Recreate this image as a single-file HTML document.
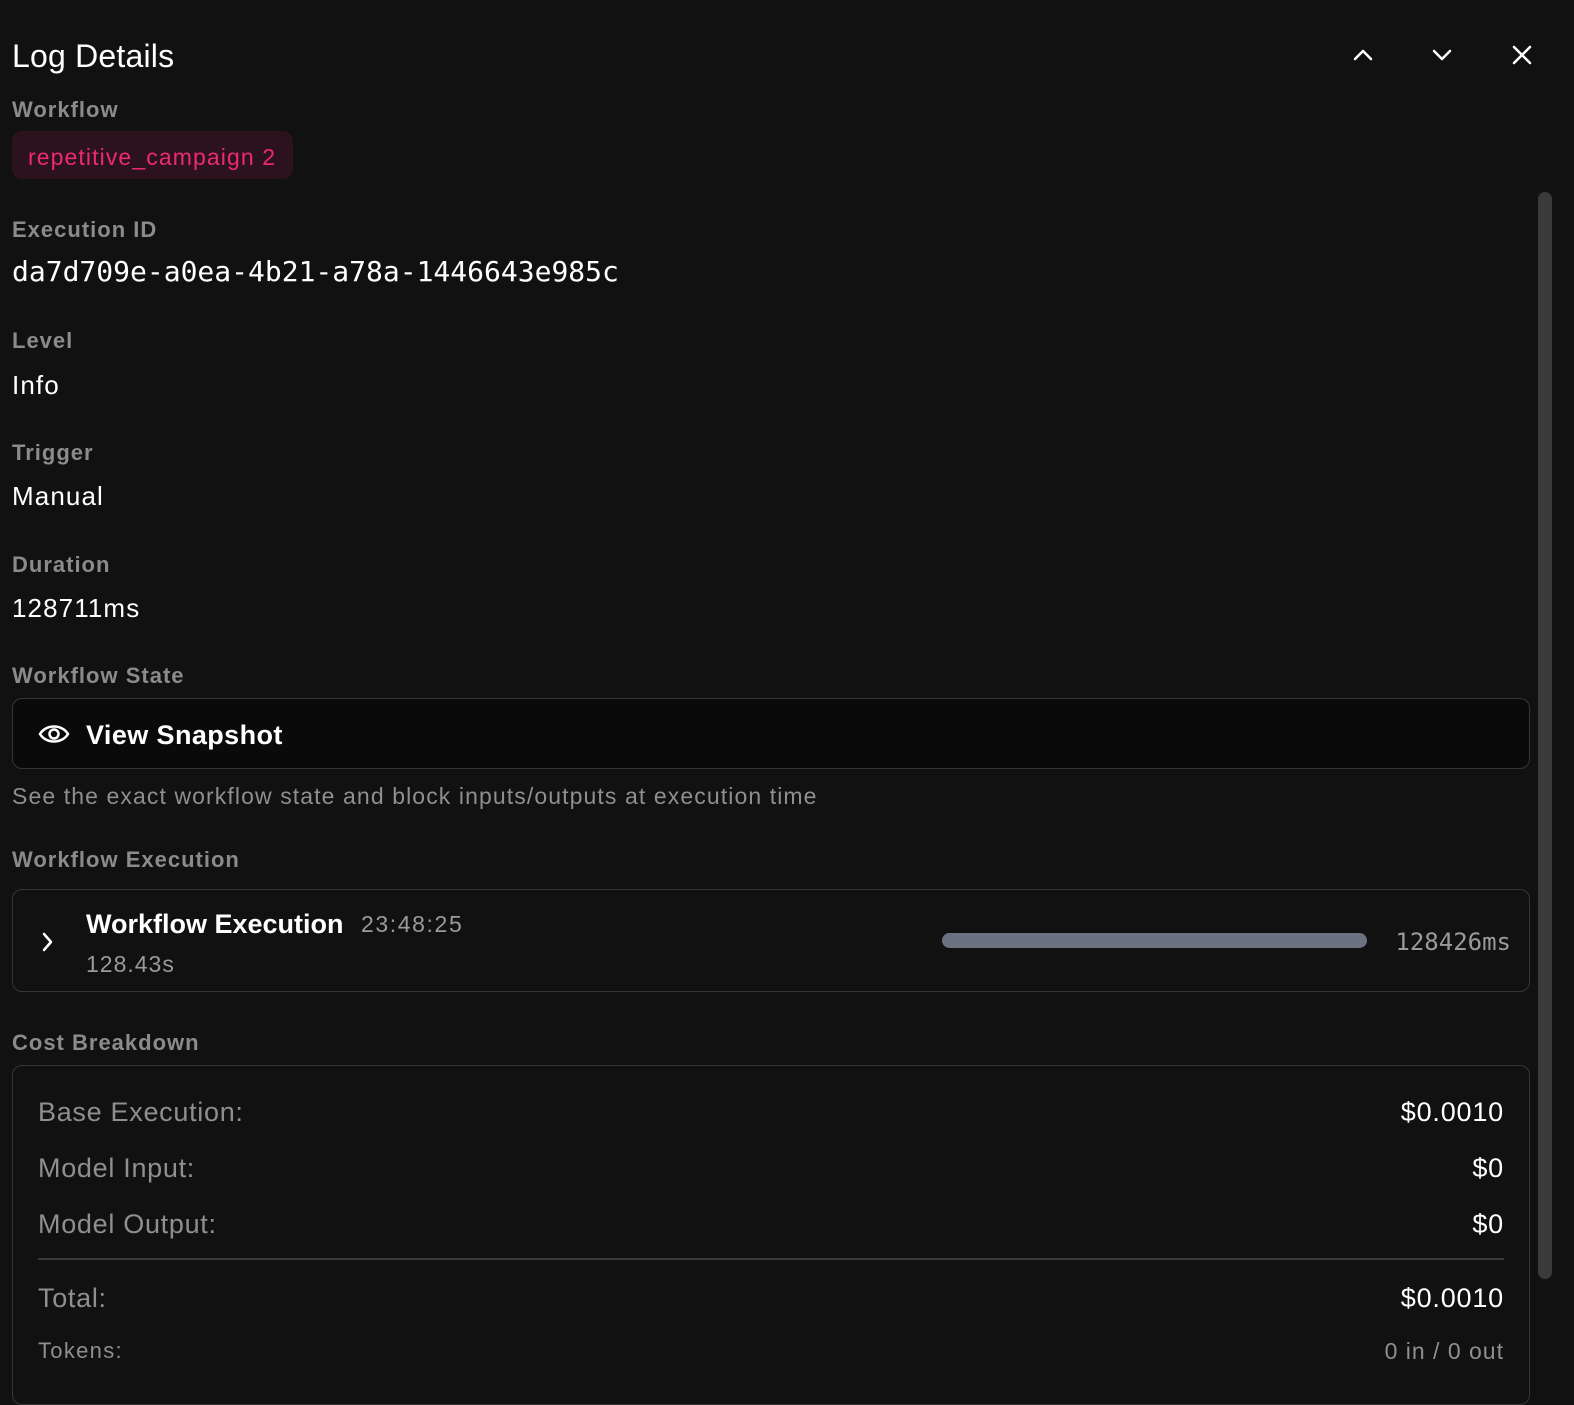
<!DOCTYPE html>
<html><head><meta charset="utf-8"><style>
html,body{margin:0;padding:0;background:#111111;width:1574px;height:1390px;overflow:hidden;font-family:"Liberation Sans",sans-serif;}
.t{position:absolute;line-height:1;white-space:nowrap;}
.lab{font-size:22px;color:#8b8b8b;font-weight:bold;letter-spacing:1px;}
.val{font-size:26px;color:#fff;letter-spacing:1.1px;}
.mono{font-family:"DejaVu Sans Mono","Liberation Mono",monospace;letter-spacing:0;}
.box{position:absolute;border:1.5px solid #353535;border-radius:10px;box-sizing:border-box;}
.r{right:70px;text-align:right;}
.g{color:#8f8f8f;letter-spacing:0.7px;}
</style></head><body>
<div class="t" style="left:12px;top:40px;font-size:32px;color:#fff;letter-spacing:0.2px;">Log Details</div>
<svg style="position:absolute;left:1350px;top:40px" width="185" height="30" viewBox="0 0 185 30" fill="none" stroke="#fff" stroke-width="2.5" stroke-linecap="round" stroke-linejoin="round">
<path d="M5 19 L13 11 L21 19"/><path d="M84 11 L92 19 L100 11"/><path d="M164 7 L180 23 M180 7 L164 23"/></svg>

<div class="t lab" style="left:12px;top:99px;">Workflow</div>
<div style="position:absolute;left:12px;top:131px;width:281px;height:48px;background:#2b121d;border-radius:10px;"></div>
<div class="t" style="left:28px;top:146px;font-size:23px;color:#ee2a6f;letter-spacing:1.1px;">repetitive_campaign 2</div>

<div class="t lab" style="left:12px;top:219px;">Execution ID</div>
<div class="t val mono" style="left:12px;top:258px;font-size:28px;">da7d709e-a0ea-4b21-a78a-1446643e985c</div>

<div class="t lab" style="left:12px;top:330px;">Level</div>
<div class="t val" style="left:12px;top:372px;">Info</div>
<div class="t lab" style="left:12px;top:442px;">Trigger</div>
<div class="t val" style="left:12px;top:483px;">Manual</div>
<div class="t lab" style="left:12px;top:554px;">Duration</div>
<div class="t val" style="left:12px;top:595px;">128711ms</div>
<div class="t lab" style="left:12px;top:665px;">Workflow State</div>

<div class="box" style="left:12px;top:698px;width:1518px;height:71px;background:#0a0a0a;"></div>
<svg style="position:absolute;left:38px;top:722px" width="32" height="24" viewBox="0 0 32 24" fill="none" stroke="#fff" stroke-width="2.5"><path d="M2 12 C8 2 24 2 30 12 C24 22 8 22 2 12 Z"/><circle cx="16" cy="12" r="4.5"/></svg>
<div class="t" style="left:86px;top:722px;font-size:27px;color:#fff;font-weight:bold;letter-spacing:0.4px;">View Snapshot</div>
<div class="t" style="left:12px;top:785px;font-size:23px;color:#8f8f8f;letter-spacing:1.1px;">See the exact workflow state and block inputs/outputs at execution time</div>

<div class="t lab" style="left:12px;top:849px;">Workflow Execution</div>
<div class="box" style="left:12px;top:889px;width:1518px;height:103px;"></div>
<svg style="position:absolute;left:40px;top:931px" width="16" height="22" viewBox="0 0 16 22" fill="none" stroke="#fff" stroke-width="2.5" stroke-linecap="round" stroke-linejoin="round"><path d="M4 3 L11 11 L4 19"/></svg>
<div class="t" style="left:86px;top:911px;font-size:27px;color:#fff;font-weight:bold;">Workflow Execution</div>
<div class="t" style="left:361px;top:913px;font-size:23px;color:#9a9a9a;letter-spacing:1.6px;">23:48:25</div>
<div class="t" style="left:86px;top:953px;font-size:23px;color:#9a9a9a;letter-spacing:1px;">128.43s</div>
<div style="position:absolute;left:942px;top:933px;width:425px;height:15px;background:#6b7280;border-radius:8px;"></div>
<div class="t mono" style="right:63px;top:930px;font-size:24px;color:#9a9a9a;">128426ms</div>

<div class="t lab" style="left:12px;top:1032px;">Cost Breakdown</div>
<div class="box" style="left:12px;top:1065px;width:1518px;height:340px;"></div>
<div class="t g" style="left:38px;top:1099px;font-size:27px;">Base Execution:</div>
<div class="t val r" style="top:1099px;font-size:27px;letter-spacing:0.8px;">$0.0010</div>
<div class="t g" style="left:38px;top:1155px;font-size:27px;">Model Input:</div>
<div class="t val r" style="top:1155px;font-size:27px;letter-spacing:0.8px;">$0</div>
<div class="t g" style="left:38px;top:1211px;font-size:27px;">Model Output:</div>
<div class="t val r" style="top:1211px;font-size:27px;letter-spacing:0.8px;">$0</div>
<div style="position:absolute;left:38px;top:1258px;width:1466px;height:2px;background:#383838;"></div>
<div class="t g" style="left:38px;top:1285px;font-size:27px;">Total:</div>
<div class="t val r" style="top:1285px;font-size:27px;letter-spacing:0.8px;">$0.0010</div>
<div class="t g" style="left:38px;top:1340px;font-size:22px;letter-spacing:1.3px;">Tokens:</div>
<div class="t g r" style="top:1340px;font-size:23px;letter-spacing:1px;">0 in / 0 out</div>

<div style="position:absolute;left:1538px;top:192px;width:14px;height:1087px;background:#3a3a3a;border-radius:7px;"></div>
</body></html>
